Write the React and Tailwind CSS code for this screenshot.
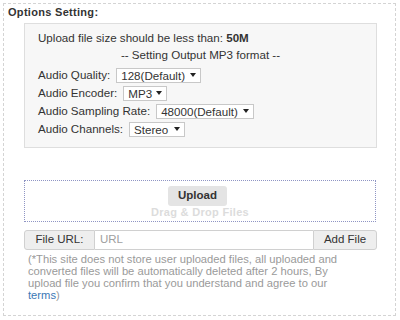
import React from "react";

const Arrow = () => (
  <svg width="6" height="4" viewBox="0 0 6 4" className="shrink-0">
    <path d="M0 0 L6 0 L3 4 Z" fill="#222" />
  </svg>
);

const FakeSelect = ({ value, width }) => (
  <div
    className="ml-[6px] h-[15px] flex items-center justify-between bg-white border border-[#c8c8c8] pl-[4px] pr-[4px] leading-[13px]"
    style={{ width }}
  >
    <span>{value}</span>
    <Arrow />
  </div>
);

const OptionRow = ({ label, value, width }) => (
  <div className="h-[18px] flex items-center">
    <span>{label}</span>
    <FakeSelect value={value} width={width} />
  </div>
);

const App = () => {
  return (
    <div
      className="w-[400px] h-[320px] bg-white text-[#333] text-[11px] pt-[3px] pl-[3px]"
      style={{ fontFamily: '"Liberation Sans", Arial, sans-serif' }}
    >
      <div className="w-[393px] h-[313px] border border-dashed border-[#d4d4d4]">
        <div className="h-[16px] leading-[16px] pl-[4px] font-bold tracking-[0.3px]">
          Options Setting:
        </div>

        <div className="mt-[3px] ml-[20px] w-[353px] h-[125px] bg-[#f7f7f7] border border-[#dedede] pt-[7px] pl-[13px] text-[11.6px]">
          <div className="h-[14px] leading-[14px]">
            Upload file size should be less than: <b>50M</b>
          </div>
          <div className="mt-[3px] h-[14px] leading-[14px] text-center pr-[13px]">
            -- Setting Output MP3 format --
          </div>
          <div className="mt-[4px]">
            <OptionRow label="Audio Quality:" value="128(Default)" width={85} />
            <OptionRow label="Audio Encoder:" value="MP3" width={44} />
            <OptionRow label="Audio Sampling Rate:" value="48000(Default)" width={98} />
            <OptionRow label="Audio Channels:" value="Stereo" width={56} />
          </div>
        </div>

        <div className="mt-[32px] ml-[20px] w-[352px] h-[42px] border border-dotted border-[#8f95c4] pt-[5px] flex flex-col items-center">
          <div className="w-[59px] h-[20px] rounded-[3px] bg-[#e4e4e4] flex items-center justify-center font-semibold text-[#333] text-[11.5px] -ml-[5px]">
            Upload
          </div>
          <div className="h-[12px] leading-[12px] font-bold text-[#dcdcdc] tracking-[0.3px]">
            Drag &amp; Drop Files
          </div>
        </div>

        <div className="mt-[8px] ml-[20px] w-[353px] h-[20px] flex text-[11.5px]">
          <div className="w-[71px] h-full bg-[#eeeeee] border border-[#d0d0d0] rounded-l-[3px] flex items-center justify-center">
            File URL:
          </div>
          <div className="flex-1 h-full bg-white border-y border-[#d0d0d0] pl-[5px] flex items-center text-[#a0a0a0]">
            URL
          </div>
          <div className="w-[64px] h-full bg-[#eeeeee] border border-[#d0d0d0] rounded-r-[3px] flex items-center justify-center">
            Add File
          </div>
        </div>

        <div className="mt-[3px] ml-[24px] leading-[12px] text-[#9a9a9a] text-[11.2px]">
          (*This site does not store user uploaded files, all uploaded and
          <br />
          converted files will be automatically deleted after 2 hours, By
          <br />
          upload file you confirm that you understand and agree to our
          <br />
          <span className="text-[#3a78b5]">terms</span>)
        </div>
      </div>
    </div>
  );
};

export default App;
